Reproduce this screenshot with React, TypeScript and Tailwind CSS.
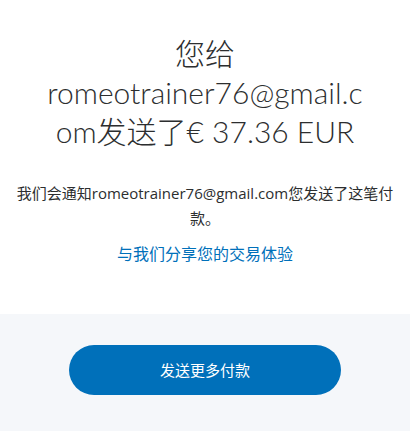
export default function App() {
  return (
    <div className="w-[410px] h-[431px] flex flex-col bg-white font-['Lato','Noto_Sans_CJK_SC',sans-serif]">
      <div className="flex flex-col items-center px-3 pt-[34px] h-[314px]">
        <h1 className="text-center text-[30px] leading-[39px] font-light text-[#2c2e2f]">
          <span className="block">您给</span>
          <span className="block">romeotrainer76@gmail.c</span>
          <span className="block">om发送了€ 37.36 EUR</span>
        </h1>
        <p className="mt-[30px] text-center text-[15px] leading-[25px] text-[#2c2e2f] font-['Open_Sans','Noto_Sans_CJK_SC',sans-serif]">
          我们会通知romeotrainer76@gmail.com您发送了这笔付款。
        </p>
        <a className="mt-[12px] text-[16px] leading-[22px] text-[#0070ba] font-['Open_Sans','Noto_Sans_CJK_SC',sans-serif]">
          与我们分享您的交易体验
        </a>
      </div>
      <div className="flex-1 bg-[#f5f7fa] flex justify-center pt-[31px]">
        <button className="w-[272px] h-[50px] rounded-full bg-[#0070ba] text-white text-[15px] font-['Open_Sans','Noto_Sans_CJK_SC',sans-serif]">
          发送更多付款
        </button>
      </div>
    </div>
  )
}
